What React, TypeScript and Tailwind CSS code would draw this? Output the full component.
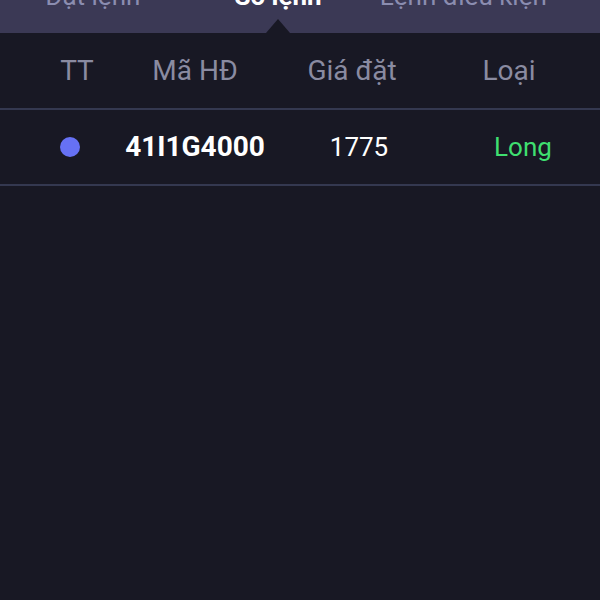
const TABS = [
  { label: "Đặt lệnh", active: false },
  { label: "Sổ lệnh", active: true },
  { label: "Lệnh điều kiện", active: false },
];

const ORDERS = [{ id: 0, code: "41I1G4000", price: "1775", side: "Long" }];

export default function App() {
  return (
    <div className="w-[600px] h-[600px] bg-[#181824] overflow-hidden font-['Roboto',sans-serif]">
      {/* Tabs */}
      <div className="relative h-[33px] bg-[#3b3955] overflow-hidden">
        <div className="grid grid-cols-3 w-[556px]">
          {TABS.map((tab) => (
            <div
              key={tab.label}
              className={`-mt-[17px] text-center text-[26px] leading-[26px] ${
                tab.active ? "text-white font-bold" : "text-[#8b8db0]"
              }`}
            >
              {tab.label}
            </div>
          ))}
        </div>
        <div className="absolute left-[266px] top-[19px] w-0 h-0 border-l-[12px] border-r-[12px] border-b-[14px] border-l-transparent border-r-transparent border-b-[#181824]" />
      </div>

      {/* Header */}
      <div className="flex h-[75px] items-center text-[28px] text-[#8a8ba1]">
        <div className="w-[140px] pl-[14px] text-center">TT</div>
        <div className="w-[110px] flex justify-center whitespace-nowrap">Mã HĐ</div>
        <div className="w-[210px] pr-[6px] text-center">Giá đặt</div>
        <div className="w-[140px] pr-[42px] text-center">Loại</div>
      </div>
      <div className="h-[2px] bg-[#343850]" />

      {/* Rows */}
      {ORDERS.map((o) => (
        <div key={o.id}>
          <div className="flex h-[74px] items-center text-[26px]">
            <div className="w-[140px] flex justify-center">
              <span className="w-5 h-5 rounded-full bg-[#6671f4]" />
            </div>
            <div className="w-[110px] flex justify-center font-bold text-[28px] text-white whitespace-nowrap">
              {o.code}
            </div>
            <div className="w-[210px] pl-[8px] text-center text-white">{o.price}</div>
            <div className="w-[140px] pr-[14px] text-center text-[#3fdf70]">{o.side}</div>
          </div>
          <div className="h-[2px] bg-[#343850]" />
        </div>
      ))}
    </div>
  );
}
